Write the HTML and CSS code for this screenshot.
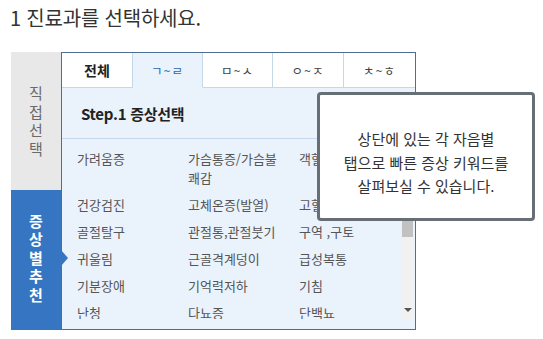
FILE: index.html
```html
<!DOCTYPE html>
<html lang="ko">
<head>
<meta charset="utf-8">
<link rel="stylesheet" href="styles.css">
</head>
<body>
<h1 class="title">1 진료과를 선택하세요.</h1>
<div class="widget">
  <div class="side">
    <div class="side-tab side-direct"><span>직</span><span>접</span><span>선</span><span>택</span></div>
    <div class="side-tab side-symptom"><span>증</span><span>상</span><span>별</span><span>추</span><span>천</span><i class="pointer"></i></div>
  </div>
  <div class="panel">
    <div class="tabs">
      <div class="tab tab-all">전체</div>
      <div class="tab tab-on">ㄱ~ㄹ</div>
      <div class="tab">ㅁ~ㅅ</div>
      <div class="tab">ㅇ~ㅈ</div>
      <div class="tab tab-last">ㅊ~ㅎ</div>
    </div>
    <div class="step">Step.1 증상선택</div>
    <div class="listbox">
      <ul class="list">
        <li>가려움증</li><li>가슴통증/가슴불쾌감</li><li>객혈</li>
        <li>건강검진</li><li>고체온증(발열)</li><li>고혈압</li>
        <li>골절탈구</li><li>관절통,관절붓기</li><li>구역 ,구토</li>
        <li>귀울림</li><li>근골격계덩이</li><li>급성복통</li>
        <li>기분장애</li><li>기억력저하</li><li>기침</li>
        <li>난청</li><li>다뇨증</li><li>단백뇨</li>
      </ul>
      <div class="scrollbar">
        <div class="thumb"></div>
        <div class="arrow-down"></div>
      </div>
    </div>
  </div>
  <div class="tooltip">상단에 있는 각 자음별<br>탭으로 빠른 증상 키워드를<br>살펴보실 수 있습니다.</div>
</div>
</body>
</html>
```

FILE: styles.css
```css
* { box-sizing: border-box; }
body {
  margin: 0;
  background: #fff;
  font-family: "Noto Sans CJK KR", "Noto Sans", sans-serif;
  color: #333;
}
.title {
  margin: 0;
  padding: 5px 0 0 10px;
  height: 52px;
  font-size: 20px;
  font-weight: 400;
  line-height: 26px;
  color: #333;
  letter-spacing: -0.2px;
}
.widget {
  position: relative;
  display: flex;
  margin-left: 11px;
  height: 278px;
}
.side {
  width: 50px;
  display: flex;
  flex-direction: column;
}
.side-tab {
  position: relative;
  display: flex;
  flex-direction: column;
  align-items: center;
  justify-content: center;
  font-size: 15px;
}
.side-tab span {
  display: block;
  height: 18.5px;
  line-height: 18.5px;
}
.side-direct {
  height: 138px;
  background: #e8e8e8;
  color: #6a6a6a;
}
.side-symptom {
  height: 140px;
  background: #3575c1;
  color: #fff;
  font-weight: 700;
  padding-bottom: 4px;
}
.pointer {
  position: absolute;
  right: -7px;
  top: 60px;
  width: 0;
  height: 0;
  border-top: 8px solid transparent;
  border-bottom: 8px solid transparent;
  border-left: 7px solid #3575c1;
}
.panel {
  width: 355px;
  border: 1px solid #4e6f92;
  background: #eaf2fb;
  display: flex;
  flex-direction: column;
}
.tabs {
  display: grid;
  grid-template-columns: 71px 70px 70px 71px 71px;
  height: 35px;
}
.tab {
  display: flex;
  align-items: center;
  justify-content: center;
  background: #fff;
  border-right: 1px solid #c5d8ea;
  border-bottom: 1px solid #c5d8ea;
  font-size: 12.5px;
  color: #444;
  letter-spacing: 1px;
}
.tab-last { border-right: 0; }
.tab-all {
  font-size: 14px;
  font-weight: 700;
  color: #222;
  letter-spacing: 0;
}
.tab-on {
  background: #eaf2fb;
  border-bottom-color: #eaf2fb;
  color: #2b68ad;
}
.step {
  height: 51px;
  border-bottom: 1px solid #c6d9ec;
  padding: 0 0 0 19px;
  display: flex;
  align-items: center;
  font-size: 15px;
  font-weight: 700;
  color: #222;
  letter-spacing: -0.3px;
}
.listbox {
  position: relative;
  height: 180px;
  overflow: hidden;
}
.list {
  margin: 0;
  padding: 10px 0 0 15px;
  list-style: none;
  display: grid;
  grid-template-columns: 111px 111px 100px;
  row-gap: 8px;
  font-size: 13px;
  line-height: 19px;
  color: #555;
}
.list li { padding-right: 12px; }
.scrollbar {
  position: absolute;
  right: 1px;
  top: 0;
  width: 13px;
  height: 180px;
  background: #f1f1f1;
}
.thumb {
  position: absolute;
  left: 1px;
  right: 1px;
  top: 8px;
  height: 90px;
  background: #c1c1c1;
}
.arrow-down {
  position: absolute;
  left: 3px;
  bottom: 7px;
  width: 0;
  height: 0;
  border-left: 4px solid transparent;
  border-right: 4px solid transparent;
  border-top: 4px solid #555;
}
.tooltip {
  position: absolute;
  left: 306px;
  top: 40px;
  width: 218px;
  height: 129px;
  background: #fff;
  border: 3px solid #686e75;
  border-radius: 4px;
  padding-top: 32px;
  text-align: center;
  font-size: 15px;
  line-height: 23.5px;
  color: #333;
}
```
